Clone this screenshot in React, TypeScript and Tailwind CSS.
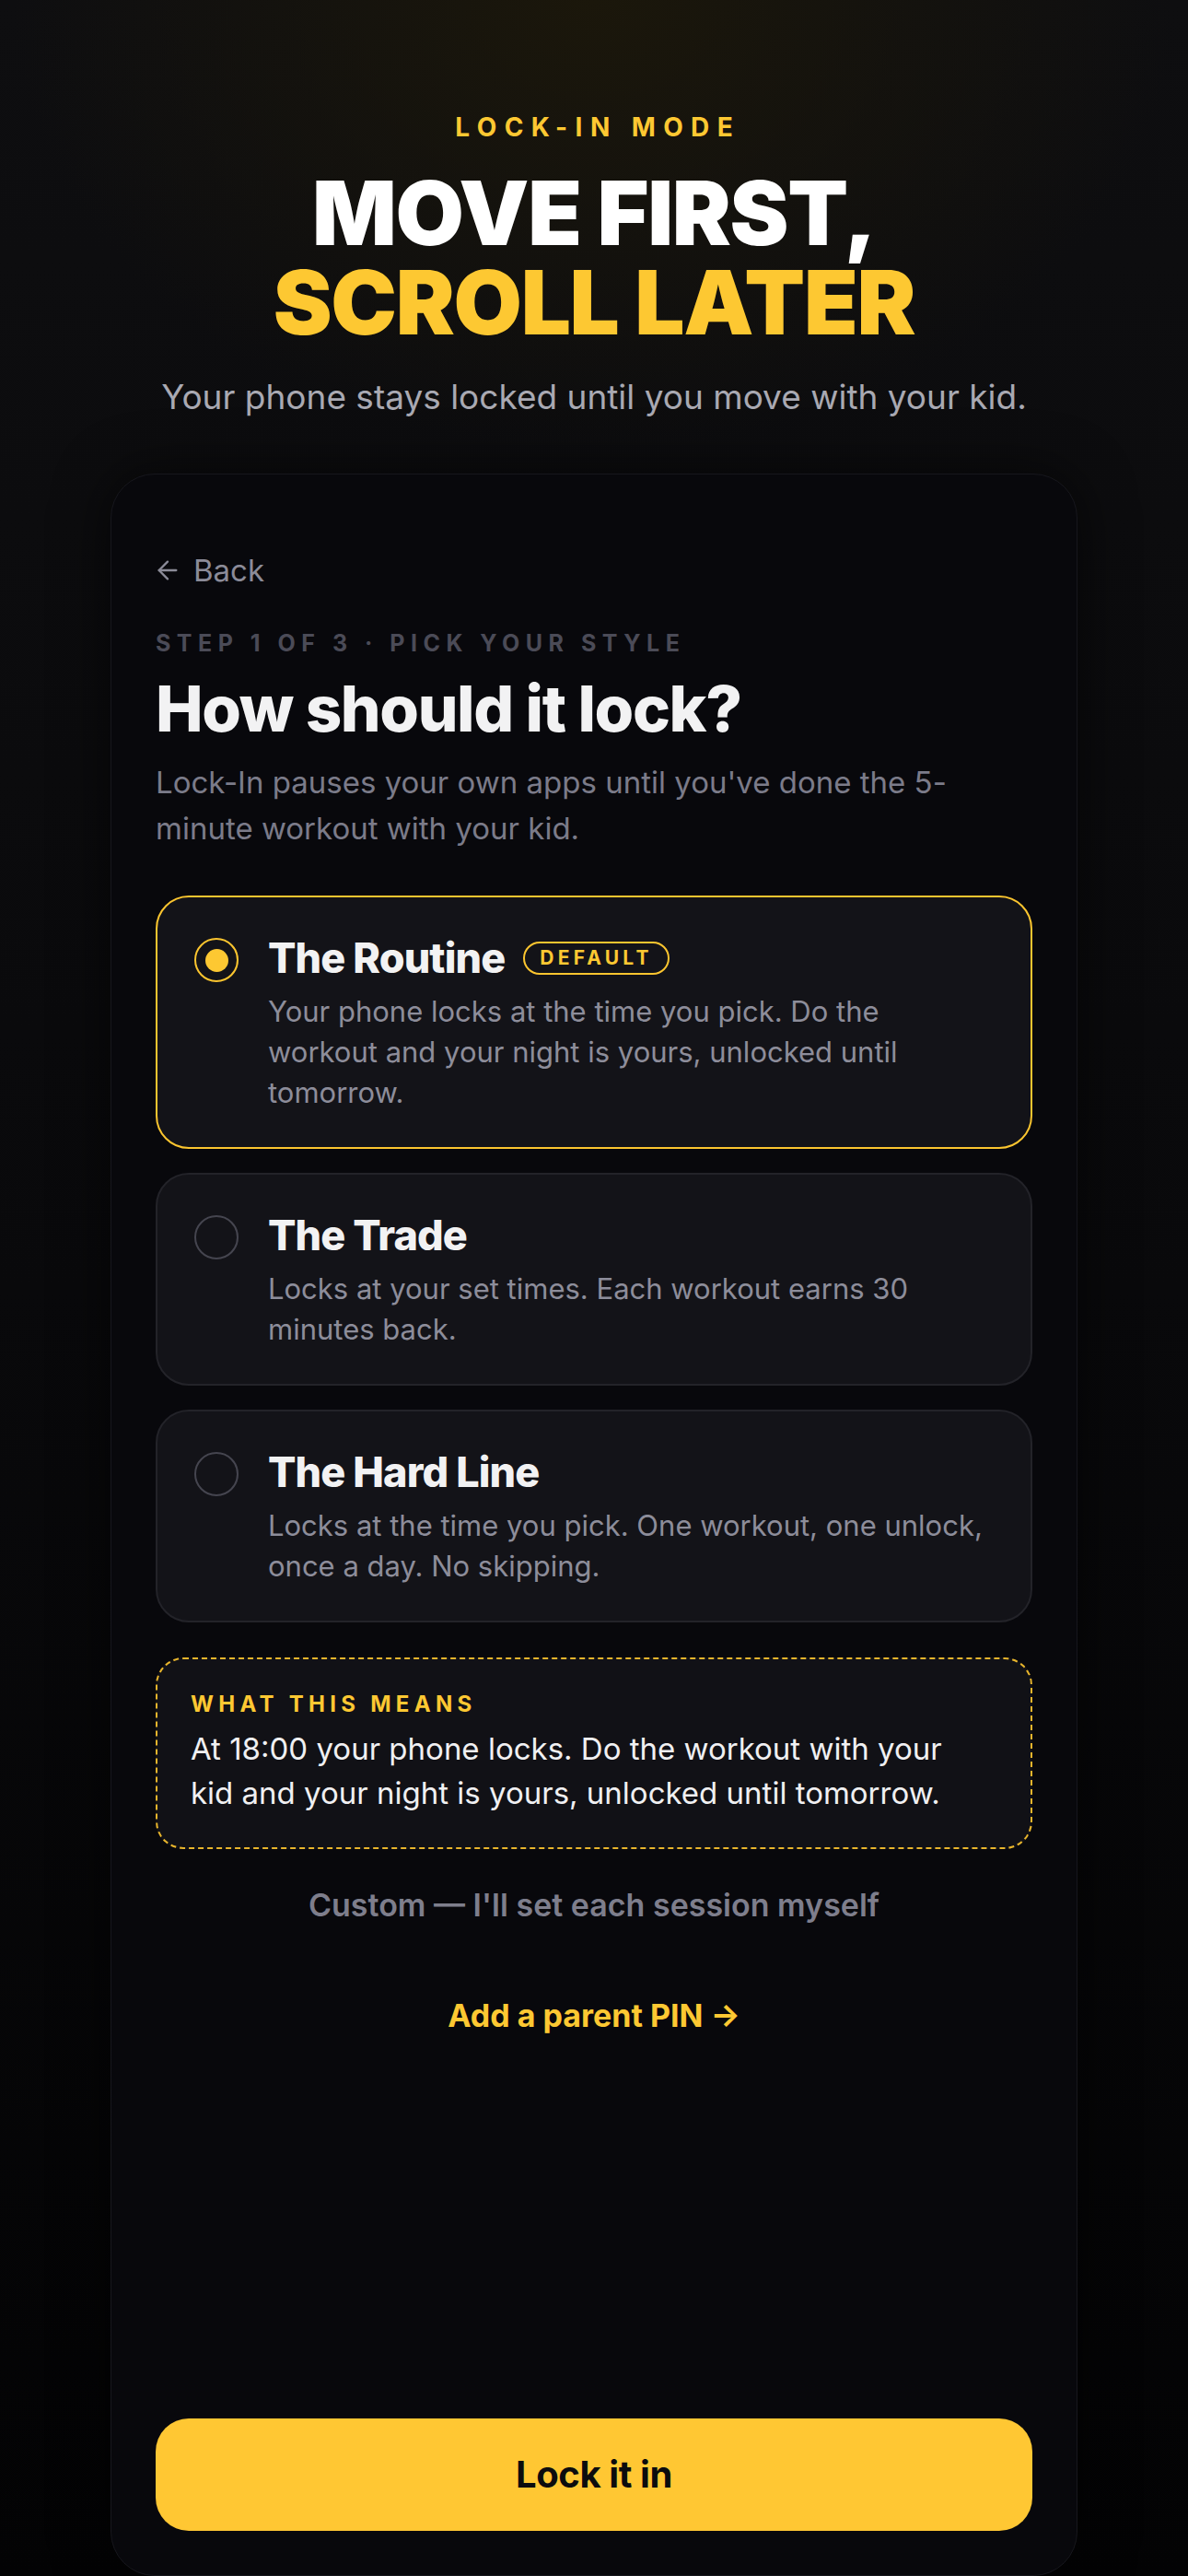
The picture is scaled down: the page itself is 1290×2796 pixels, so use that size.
import { ArrowLeft } from 'lucide-react';

const font = { fontFamily: 'Inter, "Noto Sans", sans-serif' };

interface LockOption {
  id: string;
  title: string;
  desc: string;
  isDefault?: boolean;
}

const options: LockOption[] = [
  {
    id: 'routine',
    title: 'The Routine',
    desc: 'Your phone locks at the time you pick. Do the workout and your night is yours, unlocked until tomorrow.',
    isDefault: true,
  },
  {
    id: 'trade',
    title: 'The Trade',
    desc: 'Locks at your set times. Each workout earns 30 minutes back.',
  },
  {
    id: 'hardline',
    title: 'The Hard Line',
    desc: 'Locks at the time you pick. One workout, one unlock, once a day. No skipping.',
  },
];

function OptionCard({ o, selected }: { o: LockOption; selected: boolean }) {
  return (
    <div
      className={`rounded-[36px] border-2 bg-[#131318] px-[40px] pt-[39px] pb-[37px] flex gap-8 items-start ${
        selected ? 'border-[#fbc52f]' : 'border-[#232329]'
      }`}
    >
      <div
        className={`mt-[5px] w-[48px] h-[48px] shrink-0 rounded-full border-2 flex items-center justify-center ${
          selected ? 'border-[#fbc52f]' : 'border-[#45454f]'
        }`}
      >
        {selected && <div className="w-[25px] h-[25px] rounded-full bg-[#fdc832]" />}
      </div>
      <div className="flex-1 min-w-0">
        <div className="flex items-center gap-[20px]">
          <span className="text-[45px] leading-[53px] font-extrabold tracking-[-0.02em] text-[#f2f2f3]">{o.title}</span>
          {o.isDefault && (
            <span className="h-[36px] px-[16px] rounded-full border-2 border-[#fbc52f] text-[21px] font-bold tracking-[0.2em] text-[#fdc832] flex items-center">
              DEFAULT
            </span>
          )}
        </div>
        <p className="mt-[10px] text-[31px] leading-[44px] text-[#8d8d9a]">{o.desc}</p>
      </div>
    </div>
  );
}

export default function App() {
  return (
    <div
      style={font}
      className="min-h-[2796px] flex flex-col bg-[radial-gradient(ellipse_900px_700px_at_50%_0%,#1b170b_0%,rgba(14,14,16,0)_70%),linear-gradient(to_bottom,#0e0e10,#09090b_50%,#030304)]"
    >
      <header className="pt-[121px] flex flex-col items-center text-center">
        <p className="text-[28px] leading-[34px] font-bold tracking-[0.3em] text-[#fdc832] pl-[0.3em]">LOCK-IN MODE</p>
        <h1 className="mt-[28px] text-[96px] leading-[97px] font-black tracking-[-0.014em]">
          <span className="block text-white">MOVE FIRST,</span>
          <span className="block text-[#fdc832]">SCROLL LATER</span>
        </h1>
        <p className="mt-[28px] text-[37px] leading-[52px] text-[#a9a9b2]">
          Your phone stays locked until you move with your kid.
        </p>
      </header>

      <main className="mt-[57px] mx-[120px] flex-1 flex flex-col rounded-[48px] border border-[#17171d] bg-[#08080c] px-[48px] pt-[80px] pb-[48px] shadow-[0_0_60px_rgba(0,0,0,0.6)]">
        <button className="self-start -ml-[3px] flex items-center gap-[12px] text-[33px] leading-[48px] text-[#8b8b98]">
          <ArrowLeft size={32} strokeWidth={1.75} />
          Back
        </button>

        <p className="mt-[37px] text-[25px] leading-[36px] font-bold tracking-[0.26em] text-[#4b4b57]">
          STEP 1 OF 3 · PICK YOUR STYLE
        </p>
        <h2 className="mt-[17px] text-[69px] leading-[72px] font-extrabold tracking-[-0.02em] text-[#f2f2f3]">
          How should it lock?
        </h2>
        <p className="mt-[19px] pr-[20px] text-[33px] leading-[50px] text-[#7b7b89]">
          Lock-In pauses your own apps until you've done the 5-minute workout with your kid.
        </p>

        <div className="mt-[48px] flex flex-col gap-[26px]">
          {options.map(o => (
            <OptionCard key={o.id} o={o} selected={o.id === 'routine'} />
          ))}
        </div>

        <div className="mt-[38px] rounded-[30px] border-2 border-dashed border-[#e8b52c] bg-[#111116] pl-[36px] pr-[50px] pt-[33px] pb-[35px]">
          <p className="text-[24px] leading-[32px] font-bold tracking-[0.22em] text-[#fdc832]">WHAT THIS MEANS</p>
          <p className="mt-[8px] text-[33px] leading-[48px] text-[#f0f0f2]">
            At 18:00 your phone locks. Do the workout with your kid and your night is yours, unlocked until tomorrow.
          </p>
        </div>

        <p className="mt-[37px] text-center text-[34px] leading-[48px] font-semibold text-[#7e7e8c]">
          Custom — I'll set each session myself
        </p>
        <p className="mt-[72px] text-center text-[34px] leading-[48px] font-bold text-[#fdc832]">
          Add a parent PIN →
        </p>

        <button className="mt-auto h-[122px] w-full rounded-[36px] bg-[#ffc733] text-[40px] font-bold tracking-[-0.01em] text-[#0c0c0e]">
          Lock it in
        </button>
      </main>
    </div>
  );
}
